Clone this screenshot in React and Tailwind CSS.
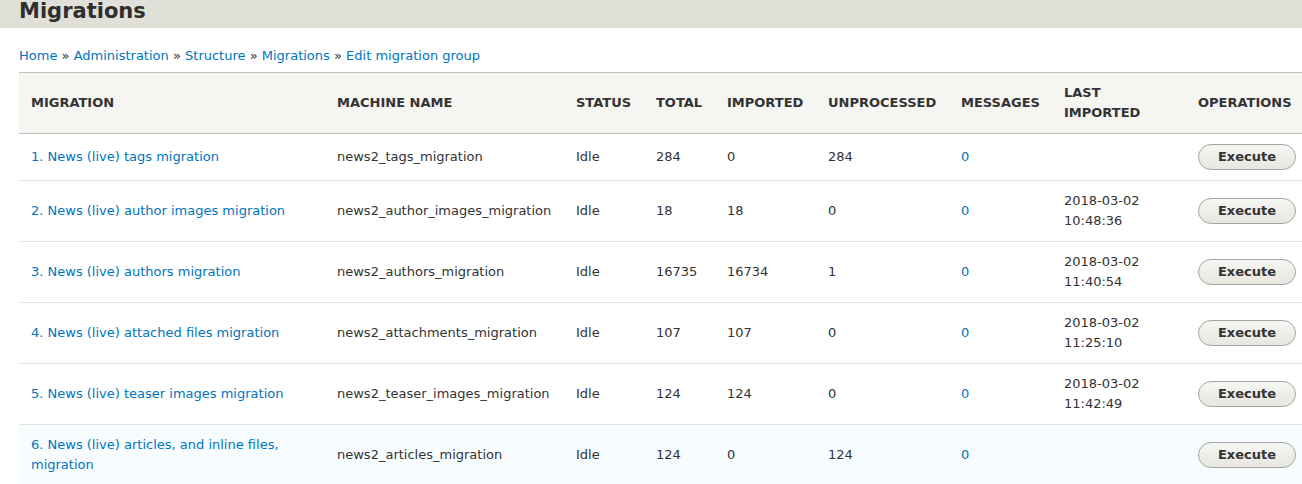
import React from "react";

const rows = [
  { name: "1. News (live) tags migration", machine: "news2_tags_migration", total: "284", imported: "0", unprocessed: "284", date: null },
  { name: "2. News (live) author images migration", machine: "news2_author_images_migration", total: "18", imported: "18", unprocessed: "0", date: ["2018-03-02", "10:48:36"] },
  { name: "3. News (live) authors migration", machine: "news2_authors_migration", total: "16735", imported: "16734", unprocessed: "1", date: ["2018-03-02", "11:40:54"] },
  { name: "4. News (live) attached files migration", machine: "news2_attachments_migration", total: "107", imported: "107", unprocessed: "0", date: ["2018-03-02", "11:25:10"] },
  { name: "5. News (live) teaser images migration", machine: "news2_teaser_images_migration", total: "124", imported: "124", unprocessed: "0", date: ["2018-03-02", "11:42:49"] },
  { name: "6. News (live) articles, and inline files, migration", machine: "news2_articles_migration", total: "124", imported: "0", unprocessed: "124", date: null, highlight: true },
];

const headers = ["Migration", "Machine name", "Status", "Total", "Imported", "Unprocessed", "Messages", "Last imported", "Operations"];

export default function App() {
  return (
    <div className="min-h-screen bg-white text-[#333] text-[13px] leading-[20px]" style={{ fontFamily: '"DejaVu Sans", "Liberation Sans", sans-serif' }}>
      <div className="h-[28px] bg-[#e0e0d8] pl-[19px] pt-[1px]">
        <h1 className="text-[21px] font-bold leading-[20px] text-[#2f2f2f]">Migrations</h1>
      </div>
      <div className="pl-[19px] pt-[18px] text-[#0074bd]">
        <a>Home</a> <span className="text-[#333]">»</span> <a>Administration</a> <span className="text-[#333]">»</span> <a>Structure</a> <span className="text-[#333]">»</span> <a>Migrations</a> <span className="text-[#333]">»</span> <a>Edit migration group</a>
      </div>
      <div className="pl-[19px] pt-[6px]">
        <table className="w-full table-fixed border-collapse">
          <colgroup>
            <col className="w-[306px]" />
            <col className="w-[239px]" />
            <col className="w-[80px]" />
            <col className="w-[71px]" />
            <col className="w-[101px]" />
            <col className="w-[133px]" />
            <col className="w-[103px]" />
            <col className="w-[134px]" />
            <col />
          </colgroup>
          <thead>
            <tr className="bg-[#f5f5f2] border-t border-b border-[#bfbfba]">
              {headers.map((h) => (
                <th key={h} className="text-left align-middle font-bold uppercase px-3 py-[10px] leading-[20px] text-[#333] h-[60px]">
                  {h === "Last imported" ? (<>LAST<br />IMPORTED</>) : h}
                </th>
              ))}
            </tr>
          </thead>
          <tbody>
            {rows.map((r) => (
              <tr key={r.machine} className={`border-b border-[#e6e4df] ${r.highlight ? "bg-[#f7fcff]" : "bg-white"}`}>
                <td className="px-3 py-[10px] align-middle text-[#0074bd]">{r.name}</td>
                <td className="px-3 py-[10px] align-middle">{r.machine}</td>
                <td className="px-3 py-[10px] align-middle">Idle</td>
                <td className="px-3 py-[10px] align-middle">{r.total}</td>
                <td className="px-3 py-[10px] align-middle">{r.imported}</td>
                <td className="px-3 py-[10px] align-middle">{r.unprocessed}</td>
                <td className="px-3 py-[10px] align-middle text-[#0074bd]">0</td>
                <td className="px-3 py-[10px] align-middle">
                  {r.date ? (<>{r.date[0]}<br />{r.date[1]}</>) : null}
                </td>
                <td className="px-3 py-[10px] align-middle whitespace-nowrap">
                  <button className="h-[26px] w-[98px] rounded-full border border-[#a6a6a6] bg-gradient-to-b from-[#f6f6f3] to-[#e7e7df] font-bold text-[#333] text-[13px] leading-[16px]">
                    Execute
                  </button>
                </td>
              </tr>
            ))}
          </tbody>
        </table>
      </div>
    </div>
  );
}
